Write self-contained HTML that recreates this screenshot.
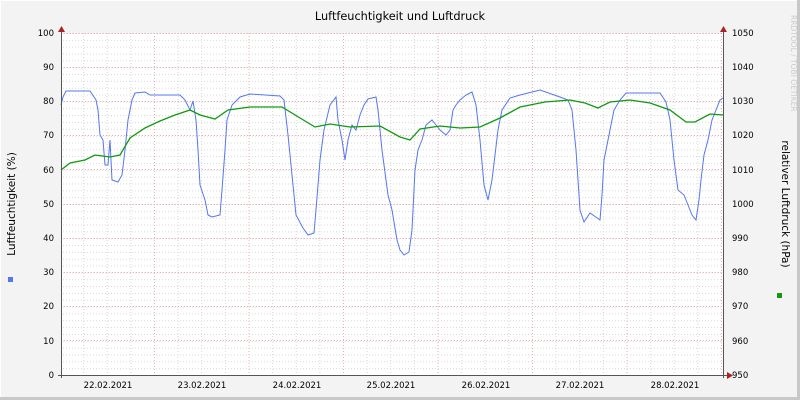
<!DOCTYPE html>
<html><head><style>
body{margin:0;background:#f3f3f3;}
svg{display:block;font-family:"DejaVu Sans","Liberation Sans",sans-serif;}
</style></head><body>
<svg width="800" height="400" viewBox="0 0 800 400" xmlns="http://www.w3.org/2000/svg">
<defs>
<pattern id="h" x="0" y="33" width="800" height="6.84" patternUnits="userSpaceOnUse">
<line x1="0" y1="0.5" x2="800" y2="0.5" stroke="#d8d8d8" stroke-width="1" stroke-dasharray="1,2"/>
</pattern>
<pattern id="v" x="59.5" y="0" width="23.625" height="400" patternUnits="userSpaceOnUse">
<line x1="0.5" y1="0" x2="0.5" y2="400" stroke="#d8d8d8" stroke-width="1" stroke-dasharray="1,2"/>
</pattern>
</defs>
<rect x="0" y="0" width="800" height="400" fill="#f3f3f3"/>
<line x1="0" y1="0.5" x2="800" y2="0.5" stroke="#ffffff"/>
<line x1="0.5" y1="0" x2="0.5" y2="400" stroke="#ffffff"/>
<rect x="797" y="0" width="3" height="400" fill="#c8c8c8"/>
<rect x="0" y="397" width="800" height="3" fill="#c8c8c8"/>
<rect x="61" y="33" width="662" height="342" fill="#ffffff"/>
<rect x="61" y="33" width="662" height="342" fill="url(#h)"/>
<rect x="61" y="33" width="662" height="342" fill="url(#v)"/>
<g stroke="#ecb0b0" stroke-width="1" stroke-dasharray="1,2">
<line x1="61" y1="33.5" x2="723" y2="33.5"/>
<line x1="61" y1="67.5" x2="723" y2="67.5"/>
<line x1="61" y1="101.5" x2="723" y2="101.5"/>
<line x1="61" y1="135.5" x2="723" y2="135.5"/>
<line x1="61" y1="169.5" x2="723" y2="169.5"/>
<line x1="61" y1="204.5" x2="723" y2="204.5"/>
<line x1="61" y1="238.5" x2="723" y2="238.5"/>
<line x1="61" y1="272.5" x2="723" y2="272.5"/>
<line x1="61" y1="306.5" x2="723" y2="306.5"/>
<line x1="61" y1="340.5" x2="723" y2="340.5"/>
<line x1="154.5" y1="33" x2="154.5" y2="375"/>
<line x1="249" y1="33" x2="249" y2="375"/>
<line x1="343.5" y1="33" x2="343.5" y2="375"/>
<line x1="438" y1="33" x2="438" y2="375"/>
<line x1="532.5" y1="33" x2="532.5" y2="375"/>
<line x1="627" y1="33" x2="627" y2="375"/>
<line x1="721.5" y1="33" x2="721.5" y2="375"/>
</g>
<polyline fill="none" stroke="#5577ee" stroke-width="1" points="61,105 63,97 66,91 90,91 96,100 98,110 100,135 103,140 105,165 108,165 110,140 112,180 118,182 122,175 125,150 128,120 132,100 135,93 145,92 150,95 180,95 185,100 190,110 193,101 196,120 198,150 200,185 205,200 208,215 212,217 220,215 222,190 225,150 227,120 232,105 240,97 250,94 280,96 284,100 288,135 292,175 296,215 303,228 308,235 314,233 316,210 320,160 324,130 330,105 336,97 338,120 342,140 345,160 348,140 352,125 356,130 360,115 364,105 368,99 376,97 378,110 382,150 388,195 392,210 397,240 400,250 404,255 409,252 412,230 415,170 418,150 422,140 426,125 432,120 436,125 440,130 446,135 450,130 453,110 456,105 460,100 466,95 472,92 476,105 480,140 484,185 488,200 492,180 498,130 502,110 510,98 520,95 540,90 560,97 568,100 572,110 576,150 580,210 584,222 590,213 600,220 602,195 604,160 606,150 610,130 614,110 620,100 626,93 660,93 666,102 670,120 674,160 678,190 684,195 688,205 692,215 696,220 699,200 701,180 704,155 708,140 712,120 716,110 720,100 723,98"/>
<polyline fill="none" stroke="#119911" stroke-width="1.3" points="61,170 70,163 85,160 95,155 110,157 120,155 130,138 145,128 160,121 175,115 190,110 200,115 215,119 228,110 250,107 282,107 300,118 315,127 330,124 350,127 380,126 400,137 410,140 420,129 440,126 460,128 480,127 500,118 520,107 545,102 570,100 585,103 598,108 610,102 630,100 650,103 670,110 686,122 695,122 710,114 723,115"/>
<line x1="61.5" y1="30" x2="61.5" y2="378" stroke="#555" stroke-width="1"/>
<line x1="723.5" y1="30" x2="723.5" y2="378" stroke="#555" stroke-width="1"/>
<line x1="58" y1="375.5" x2="728" y2="375.5" stroke="#555" stroke-width="1"/>
<polygon points="58,32 65,32 61.5,26" fill="#aa2222"/>
<polygon points="720,32 727,32 723.5,26" fill="#aa2222"/>
<polygon points="727,372 727,379 733,375.5" fill="#aa2222"/>
<g font-size="8.5" fill="#000" text-anchor="end">
<text x="54" y="36">100</text><text x="54" y="70">90</text><text x="54" y="104">80</text><text x="54" y="138">70</text><text x="54" y="173">60</text><text x="54" y="207">50</text><text x="54" y="241">40</text><text x="54" y="275">30</text><text x="54" y="309">20</text><text x="54" y="344">10</text><text x="54" y="378">0</text>
</g>
<g font-size="8.5" fill="#000">
<text x="732" y="36">1050</text><text x="732" y="70">1040</text><text x="732" y="104">1030</text><text x="732" y="138">1020</text><text x="732" y="173">1010</text><text x="732" y="207">1000</text><text x="732" y="241">990</text><text x="732" y="275">980</text><text x="732" y="309">970</text><text x="732" y="344">960</text><text x="732" y="378">950</text>
</g>
<g font-size="8.5" fill="#000" text-anchor="middle">
<text x="108" y="388">22.02.2021</text><text x="202" y="388">23.02.2021</text><text x="297" y="388">24.02.2021</text><text x="391" y="388">25.02.2021</text><text x="486" y="388">26.02.2021</text><text x="580" y="388">27.02.2021</text><text x="675" y="388">28.02.2021</text>
</g>
<text x="400" y="20" font-size="11.3" text-anchor="middle" fill="#000">Luftfeuchtigkeit und Luftdruck</text>
<text transform="translate(15,204) rotate(-90)" font-size="10.5" text-anchor="middle" fill="#000">Luftfeuchtigkeit (%)</text>
<text transform="translate(782,204) rotate(90)" font-size="10.5" text-anchor="middle" fill="#000">relativer Luftdruck (hPa)</text>
<text transform="translate(791,15) rotate(90)" font-size="7.5" fill="#cccccc">RRDTOOL / TOBI OETIKER</text>
<rect x="8" y="277" width="5" height="5" fill="#5577ee"/>
<rect x="777" y="293" width="5" height="5" fill="#119911"/>
</svg>
</body></html>
